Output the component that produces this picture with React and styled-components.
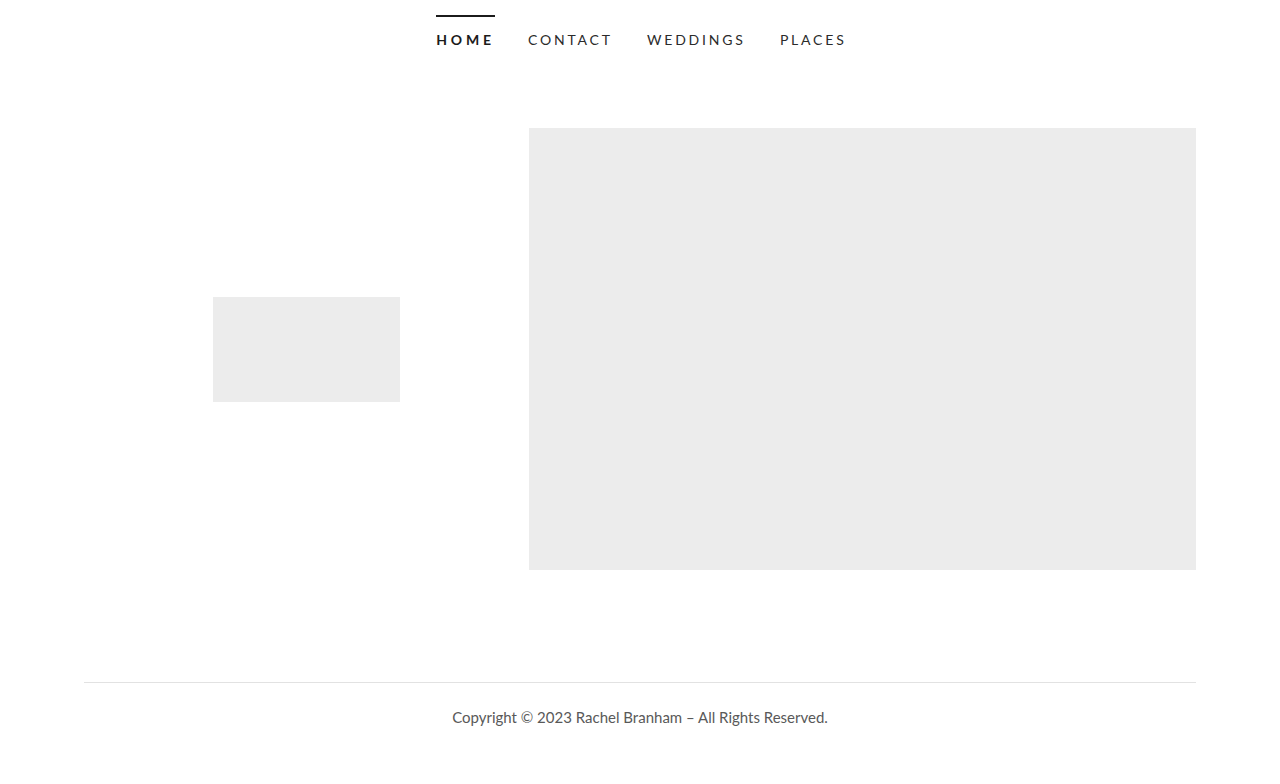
import React from "react";
import styled, { createGlobalStyle } from "styled-components";

const GlobalStyle = createGlobalStyle`
  html, body {
    margin: 0;
    padding: 0;
    background: #fff;
    font-family: Lato, "Open Sans", sans-serif;
  }
`;

const Page = styled.div`
  width: 1280px;
  min-height: 784px;
  display: flex;
  flex-direction: column;
`;

const Nav = styled.nav`
  display: flex;
  justify-content: center;
  gap: 37px;
  padding-top: 15px;
  height: 128px;
  box-sizing: border-box;
`;

const NavItem = styled.a`
  display: block;
  padding-top: 14px;
  border-top: 2px solid ${(p) => (p.$active ? "#1b1b1b" : "transparent")};
  font-size: 14px;
  line-height: 18px;
  letter-spacing: ${(p) => (p.$active ? "0.27em" : "0.2em")};
  margin-right: ${(p) => (p.$active ? "-0.27em" : "-0.2em")};
  font-weight: ${(p) => (p.$active ? 700 : 400)};
  color: ${(p) => (p.$active ? "#1b1b1b" : "#2b2b2b")};
  text-transform: uppercase;
  text-decoration: none;
  cursor: pointer;
`;

const Main = styled.main`
  display: flex;
  align-items: center;
  margin: 0 84px;
`;

const LeftCol = styled.div`
  width: 445px;
  box-sizing: border-box;
  padding: 0 24px;
  display: flex;
  justify-content: center;
`;

const RightCol = styled.div`
  flex: 1;
`;

const Placeholder = styled.div`
  background: #ececec;
  width: ${(p) => p.$w};
  height: ${(p) => p.$h}px;
`;

const Footer = styled.footer`
  margin: 112px 84px 0;
  border-top: 1px solid #e2e2e2;
  padding-top: 25px;
  text-align: center;
  font-size: 15px;
  color: #595959;
`;

const navLinks = ["Home", "Contact", "Weddings", "Places"];

const App = () => {
  return (
    <>
      <GlobalStyle />
      <Page>
        <Nav>
          {navLinks.map((label, i) => (
            <NavItem key={label} $active={i === 0}>
              {label}
            </NavItem>
          ))}
        </Nav>
        <Main>
          <LeftCol>
            <Placeholder $w="187px" $h={105} />
          </LeftCol>
          <RightCol>
            <Placeholder $w="100%" $h={442} />
          </RightCol>
        </Main>
        <Footer>Copyright © 2023 Rachel Branham – All Rights Reserved.</Footer>
      </Page>
    </>
  );
};

export default App;
